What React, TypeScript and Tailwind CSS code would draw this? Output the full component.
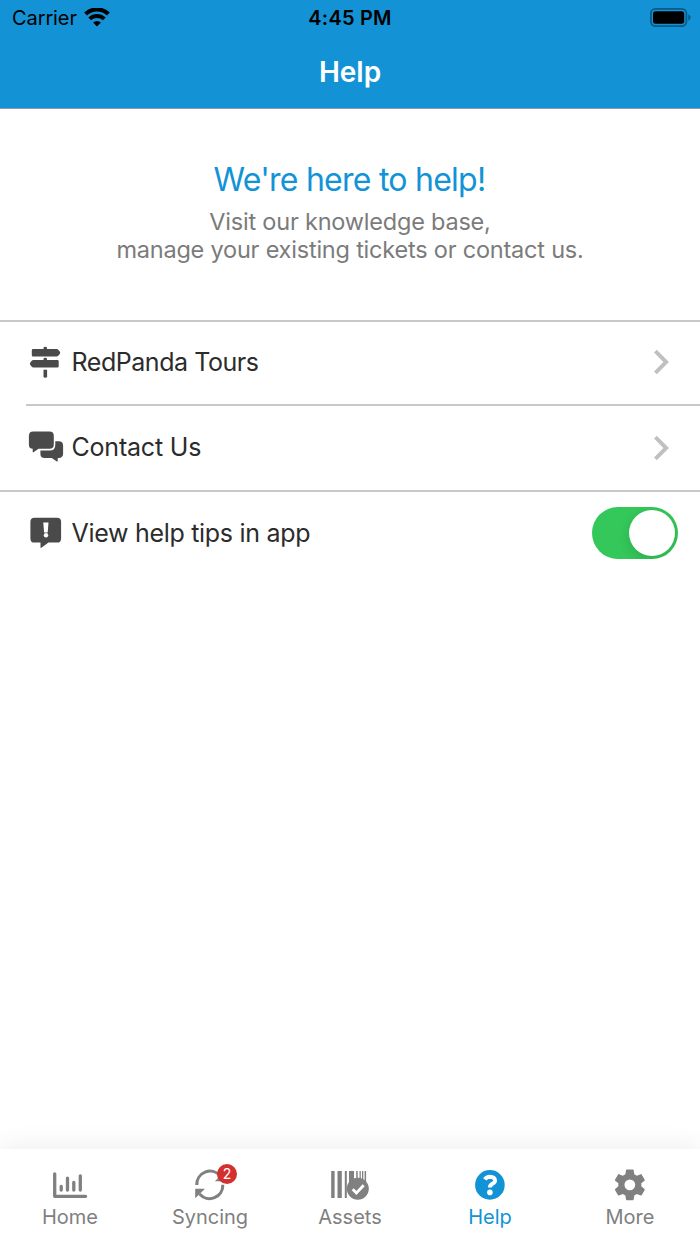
import { useState } from "react"

const WifiIcon = () => (
  <svg className="h-[20px] w-[26px]" viewBox="0 0 26 20" fill="none" stroke="#000">
    <path d="M1.6 6A16.4 16.4 0 0 1 24.4 6" strokeWidth="4.1" />
    <path d="M5.7 10.9A10.6 10.6 0 0 1 20.3 10.9" strokeWidth="3.9" />
    <path d="M9.1 14.4A5.8 5.8 0 0 1 16.9 14.4L13 18.4Z" fill="#000" stroke="none" />
  </svg>
)

const BatteryIcon = () => (
  <svg className="h-[20px] w-[41px]" viewBox="0 0 41 20">
    <rect x="0.9" y="0.9" width="35.5" height="17.2" rx="4.6" fill="none" stroke="#0a5c87" strokeWidth="1.8" />
    <rect x="3" y="3.2" width="31.2" height="12.6" rx="2.5" fill="#000" />
    <path d="M38.2 6.5C41.4 7.7 41.4 11.3 38.2 12.5Z" fill="#0a5c87" />
  </svg>
)

const SignpostIcon = () => (
  <svg className="h-[32px] w-[36px]" viewBox="28 346 36 32" fill="#4a4a4a">
    <path d="M33 349h10.5v-1q0-1.2 1.7-1.2t1.8 1.2v1h9.5q1.2 0 2 .9l1.4 1.8q.7 1 0 2l-1.4 1.7q-.8 1-2 1H33q-1.2 0-1.2-1.2v-5q0-1.2 1.2-1.2Z" />
    <path d="M33.5 360h10v-1q0-1.2 1.7-1.2t1.8 1.2v1h10.5q1.2 0 1.2 1.2v5.1q0 1.2-1.2 1.2h-24q-1.2 0-2-.9l-1.3-1.8q-.7-1 0-2l1.3-1.8q.8-1 2-1Z" />
    <path d="M43.5 369.7h3.6v6.7q0 1.3-1.8 1.3t-1.8-1.3Z" />
  </svg>
)

const ChatIcon = () => (
  <svg className="h-[32px] w-[36px]" viewBox="28 431 36 32" fill="#4a4a4a">
    <path d="M33.3 431.5h16.2q4.3 0 4.3 4.3v8.7q0 4.3-4.3 4.3h-11l-5 3.4q-.8.5-.8-.5v-2.9q-3.8 0-3.8-4.3v-8.7q0-4.3 4.4-4.3Z" />
    <path d="M55.3 441.2h3.4q4.4 0 4.4 4.3v8q0 4.4-4.4 4.6l-1 .1v2.8q0 .9-.8.4l-5.2-3.3h-7.1q-4.2 0-4.2-4.3v-3.2h9.2q5.7 0 5.7-5.6Z" />
  </svg>
)

const TipIcon = () => (
  <svg className="h-[32px] w-[36px]" viewBox="28 517 36 32">
    <path fill="#4a4a4a" d="M34.5 517.7H57q4.1 0 4.1 4.1v16.6q0 4.2-4.1 4.2h-8.5l-6.8 5q-1.2.8-1.2-.6v-4.4h-6q-4.1 0-4.1-4.2v-16.6q0-4.1 4.1-4.1Z" />
    <path fill="#fff" d="M43.3 522.5h5.2l-.8 9.9h-3.6Z" />
    <circle cx="46" cy="535.3" r="2.2" fill="#fff" />
  </svg>
)

const Chevron = () => (
  <svg className="h-[26px] w-[16px]" viewBox="0 0 16 26" fill="none" stroke="#c0c0c0" strokeWidth="3.9">
    <path d="M1.4 2.2 12.2 13 1.4 23.8" />
  </svg>
)

const HomeIcon = () => (
  <svg className="h-[36px] w-[40px]" viewBox="50 1167 40 36" fill="none" stroke="#808080" strokeWidth="3.3" strokeLinecap="round" strokeLinejoin="round">
    <path d="M54.7 1173.8v22.5h30.9" />
    <path d="M61.2 1186.5v3.6M67.5 1178.2v11.9M73.8 1182.3v7.8M80.3 1175.8v14.3" />
  </svg>
)

const SyncIcon = () => (
  <svg className="h-[36px] w-[40px]" viewBox="190 1167 40 36">
    <g fill="none" stroke="#808080" strokeWidth="3.1">
      <path d="M196.8 1185A13.3 13.3 0 0 1 220 1175.6" />
      <path d="M222.8 1184.8A13.2 13.2 0 0 1 199.6 1194" />
    </g>
    <path fill="#808080" d="M195.2 1188.8h9.8l-9.8 9.5ZM224.3 1172v9.2h-9.5Z" />
  </svg>
)

const AssetsIcon = () => (
  <svg className="h-[36px] w-[40px]" viewBox="330 1167 40 36" fill="#808080">
    <path d="M331.2 1171h3.4v27h-3.4zM337.5 1171h4.3v27h-4.3zM344.8 1171h2v27h-2zM349 1171h5v14h-5zM356.2 1171h1.5v9h-1.5zM359.5 1171h1.3v9h-1.3zM362 1171h1.3v9h-1.3zM364.6 1171h1.5v11h-1.5z" />
    <circle cx="357.8" cy="1188.8" r="11" />
    <path d="m352.7 1189.2 3.7 3.8 7.3-7.8" fill="none" stroke="#fff" strokeWidth="2.8" />
  </svg>
)

const HelpIcon = () => (
  <svg className="h-[36px] w-[40px]" viewBox="470 1167 40 36">
    <circle cx="489.9" cy="1184.9" r="14.8" fill="#1193d6" />
    <path d="M484.8 1179.4q1.7-2.7 5.1-2.7 4.9.2 5.2 3.7 0 2-2.6 3.4-2.6 1.5-2.6 3.4v.3" fill="none" stroke="#fff" strokeWidth="3.9" />
    <circle cx="489.9" cy="1192.4" r="2.8" fill="#fff" />
  </svg>
)

const MoreIcon = () => (
  <svg className="h-[36px] w-[36px] text-[#808080]" viewBox="0.4 0.4 23.4 23.4" fill="currentColor">
    <path d="M19.43 12.98c.04-.32.07-.64.07-.98s-.03-.66-.07-.98l2.11-1.65c.19-.15.24-.42.12-.64l-2-3.46c-.12-.22-.39-.3-.61-.22l-2.49 1c-.52-.4-1.08-.73-1.69-.98l-.38-2.65C14.46 2.18 14.25 2 14 2h-4c-.25 0-.46.18-.49.42l-.38 2.65c-.61.25-1.17.59-1.69.98l-2.49-1c-.23-.09-.49 0-.61.22l-2 3.46c-.13.22-.07.49.12.64l2.11 1.65c-.04.32-.07.65-.07.98s.03.66.07.98l-2.11 1.65c-.19.15-.24.42-.12.64l2 3.46c.12.22.39.3.61.22l2.49-1c.52.4 1.08.73 1.69.98l.38 2.65c.03.24.24.42.49.42h4c.25 0 .46-.18.49-.42l.38-2.65c.61-.25 1.17-.59 1.69-.98l2.49 1c.23.09.49 0 .61-.22l2-3.46c.12-.22.07-.49-.12-.64l-2.11-1.65ZM12 15.5a3.5 3.5 0 1 1 0-7 3.5 3.5 0 0 1 0 7Z" />
  </svg>
)

const tabs = [
  { label: "Home", icon: HomeIcon },
  { label: "Syncing", icon: SyncIcon, badge: 2 },
  { label: "Assets", icon: AssetsIcon },
  { label: "Help", icon: HelpIcon },
  { label: "More", icon: MoreIcon },
]

export default function App() {
  const [tips, setTips] = useState(true)
  const [active, setActive] = useState("Help")

  return (
    <div className="flex h-[1244px] w-[700px] flex-col overflow-hidden bg-white font-['Inter',sans-serif] text-[#2c2c2c]">
      <header className="h-[109px] shrink-0 border-b border-[#8b9ba5] bg-[#1393d6]">
        <div className="grid h-[36px] grid-cols-[1fr_auto_1fr] items-center pl-[12px] pr-[9px] text-black">
          <div className="flex items-center gap-[7px]">
            <span className="text-[20px] leading-[24px] tracking-[-0.1px]">Carrier</span>
            <WifiIcon />
          </div>
          <span className="-ml-[3px] text-center text-[20px] font-semibold leading-[24px] tracking-[0.2px]">4:45 PM</span>
          <div className="flex justify-end">
            <BatteryIcon />
          </div>
        </div>
        <h1 className="pt-[18px] text-center text-[28px] font-semibold leading-[36px] text-white">Help</h1>
      </header>

      <section className="h-[211px] shrink-0 pt-[51px] text-center">
        <h2 className="-ml-[1px] text-[32px] leading-[40px] tracking-[-0.75px] text-[#1193d6]">We're here to help!</h2>
        <p className="mt-[8px] text-[23.5px] leading-[28px] tracking-[-0.21px] text-[#7b7b7b]">
          Visit our knowledge base,
          <br />
          manage your existing tickets or contact us.
        </p>
      </section>

      <main className="flex-1">
        <div className="flex h-[84px] items-center border-t-2 border-[#c8c8c8] pb-[2px] pl-[28px] pr-[30px]">
          <SignpostIcon />
          <span className="ml-[7.5px] flex-1 text-[25px] leading-[32px] tracking-[-0.45px]">RedPanda Tours</span>
          <Chevron />
        </div>
        <div className="ml-[26px] flex h-[86px] items-center border-t-2 border-[#c8c8c8] pl-[2px] pr-[30px]">
          <div className="flex flex-1 items-center pb-[2px]">
            <ChatIcon />
            <span className="ml-[7.5px] text-[25px] leading-[32px] tracking-[-0.2px]">Contact Us</span>
          </div>
          <Chevron />
        </div>
        <div className="flex h-[86px] items-center border-t-2 border-[#c8c8c8] pb-[2px] pl-[28px] pr-[22px]">
          <TipIcon />
          <span className="ml-[7.5px] flex-1 text-[25px] leading-[32px] tracking-[-0.3px]">View help tips in app</span>
          <button
            role="switch"
            aria-checked={tips}
            onClick={() => setTips(!tips)}
            className={`flex h-[52px] w-[86px] items-center overflow-hidden rounded-full px-[3px] ${tips ? "justify-end bg-[#34c759]" : "justify-start bg-gray-200"}`}
          >
            <span className="size-[46px] rounded-full bg-white shadow-[0_4px_12px_rgba(0,0,0,0.13)]" />
          </button>
        </div>
      </main>

      <nav className="grid h-[95px] shrink-0 grid-cols-5 bg-white shadow-[0_-3px_24px_rgba(0,0,0,0.07)]">
        {tabs.map((tab) => (
          <button
            key={tab.label}
            onClick={() => setActive(tab.label)}
            className={`flex flex-col items-center pt-[18px] ${active === tab.label ? "text-[#1193d6]" : "text-[#808080]"}`}
          >
            <span className="relative">
              <tab.icon />
              {tab.badge && (
                <span className="absolute -top-[3px] right-[-7px] flex size-[20px] items-center justify-center rounded-full bg-[#d32f2f] text-[14px] leading-none text-white">
                  {tab.badge}
                </span>
              )}
            </span>
            <span className="mt-[2px] text-[20px] leading-[24px]">{tab.label}</span>
          </button>
        ))}
      </nav>
    </div>
  )
}
